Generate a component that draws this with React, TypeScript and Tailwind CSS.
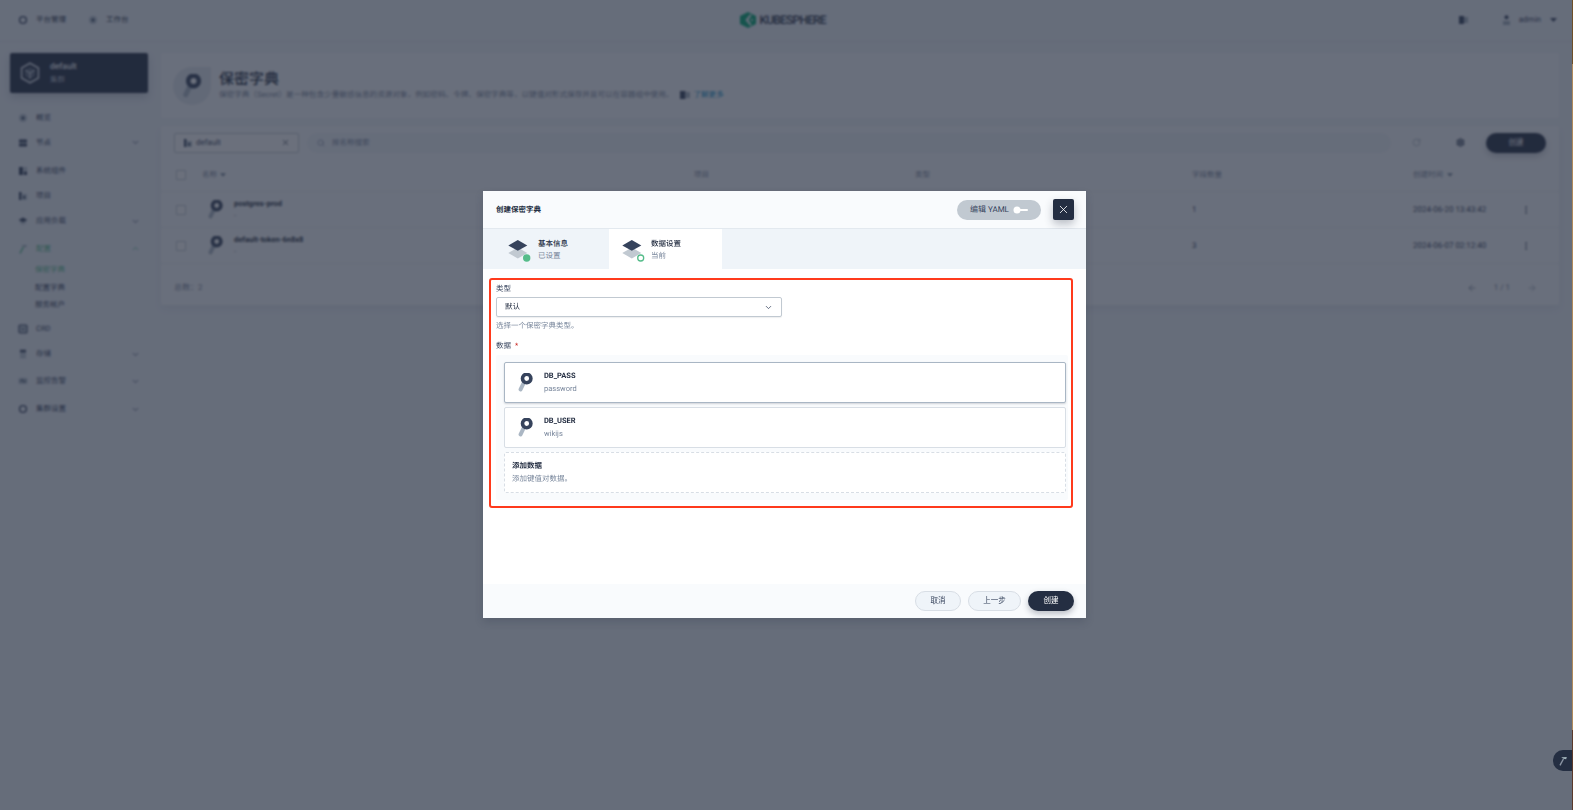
import React from "react";
import { ChevronDown, ChevronUp, X, Search, RotateCw, Settings, EllipsisVertical, ArrowLeft, ArrowRight } from "lucide-react";

const font = { fontFamily: '"Roboto","Noto Sans CJK SC",sans-serif' };

function KeyIcon({ size = 19, dark = "#36435c", light = "#abb7c4", hole = "#ffffff" }: { size?: number; dark?: string; light?: string; hole?: string }) {
  return (
    <svg width={size} height={size} viewBox="0 0 19 19" fill="none">
      <path d="M8.4 8.5 L4.6 16.4" stroke={light} strokeWidth="4" strokeLinecap="round" />
      <circle cx="10.7" cy="5.5" r="4.2" stroke={dark} strokeWidth="3.6" fill={hole} />
    </svg>
  );
}

function StackIcon({ done }: { done: boolean }) {
  return (
    <svg width="26" height="26" viewBox="0 0 26 26" fill="none">
      <path d="M12.8 11.5 L22.3 17 L12.8 22.5 L3.3 17 Z" fill="#c1c9d1" />
      <path d="M12.8 4 L22.3 9.4 L12.8 14.8 L3.3 9.4 Z" fill="#36435c" />
      {done ? <circle cx="21.7" cy="22" r="3.7" fill="#55bc8a" /> : <circle cx="21.7" cy="22" r="3" fill="#fff" stroke="#55bc8a" strokeWidth="1.3" />}
    </svg>
  );
}

function NavIcon({ kind, color = "#36435c" }: { kind: string; color?: string }) {
  return (
    <svg width="10" height="10" viewBox="0 0 10 10" fill="none">
      {kind === "ring" && <circle cx="5" cy="5" r="3.4" stroke={color} strokeWidth="1.4" />}
      {kind === "dot" && (<><circle cx="5" cy="5" r="3.9" fill="#b6c2cd" /><circle cx="5" cy="5" r="1.5" fill={color} /></>)}
      {kind === "node" && (<><rect x="1" y="1.6" width="8" height="3" rx=".5" fill={color} /><rect x="1" y="5.4" width="8" height="3" rx=".5" fill={color} /></>)}
      {kind === "grid" && (<><rect x="1" y="1" width="4" height="8" fill={color} /><rect x="5.8" y="1" width="3.2" height="3.6" fill="#b6c2cd" /><rect x="5.8" y="5.4" width="3.2" height="3.6" fill={color} /></>)}
      {kind === "proj" && (<><rect x="1" y="1" width="2.5" height="8" fill={color} /><rect x="3.5" y="3" width="5.5" height="6" fill="#b6c2cd" /><rect x="5.2" y="5" width="2" height="2.6" fill={color} /></>)}
      {kind === "load" && (<><path d="M5 1.5 L9.4 4 L5 6.5 L.6 4 Z" fill={color} /><path d="M1.8 5.8 L5 7.6 L8.2 5.8 L8.2 7 L5 8.8 L1.8 7 Z" fill="#b6c2cd" /></>)}
      {kind === "hammer" && (<><path d="M2 9.4 L5.4 3" stroke={color} strokeWidth="1.4" /><path d="M3.2 1.2 L8.8 1 L8.2 3.2 L5.4 2.8 Z" fill="#9fb0b8" /></>)}
      {kind === "crd" && (<><rect x="1" y="1" width="8" height="8" rx="1" stroke={color} strokeWidth="1.1" fill="#b6c2cd" /><path d="M3.5 4.4 L5 5.8 L6.5 4.4" stroke={color} /></>)}
      {kind === "store" && (<><rect x="2" y=".8" width="6" height="2.6" fill={color} /><rect x="2" y="3.8" width="6" height="2.4" fill="#b6c2cd" /><rect x="2" y="6.6" width="6" height="2.6" fill="#b6c2cd" /></>)}
      {kind === "mon" && (<><rect x=".8" y="2" width="8.4" height="6" rx=".5" fill="#b6c2cd" /><path d="M1.5 5 H3.5 L4.4 3.2 L5.6 6.4 L6.4 5 H8.5" stroke={color} strokeWidth=".8" /></>)}
    </svg>
  );
}

function SideItem({ icon, label, h, chevron, active }: { icon: string; label: string; h: string; chevron?: boolean; active?: boolean }) {
  return (
    <div className={`flex items-center pl-[18px] pr-[21px] ${h}`}>
      <span className="w-[18px] flex"><NavIcon kind={icon} color={active ? "#55bc8a" : "#36435c"} /></span>
      <span className={`flex-1 text-[7.5px] ${active ? "text-[#55bc8a]" : "text-[#36435c]"}`}>{label}</span>
      {chevron && (active ? <ChevronUp size={9} color="#55bc8a" strokeWidth={2} /> : <ChevronDown size={9} color="#36435c" strokeWidth={2} />)}
    </div>
  );
}

function Row({ name, count, time }: { name: string; count: string; time: string }) {
  return (
    <div className="flex items-center h-[36px] border-b border-[#e9eef4]">
      <span className="w-[10px] h-[10px] ml-[15px] border border-[#c1c9d1] rounded-[1px] bg-white" />
      <span className="ml-[20px] w-[19px] flex"><KeyIcon size={19} /></span>
      <div className="ml-[9px] w-[460px] flex flex-col gap-[2px]">
        <span className="text-[7.5px] leading-[10px] font-bold text-[#242e42]">{name}</span>
        <span className="text-[7.5px] leading-[10px] text-[#79879c]">-</span>
      </div>
      <span className="w-[221px] text-[8px] text-[#36435c]">-</span>
      <span className="w-[277px] text-[8px] text-[#36435c]">Opaque</span>
      <span className="w-[221px] text-[8px] text-[#36435c]">{count}</span>
      <span className="w-[108px] text-[8px] text-[#36435c]">{time}</span>
      <EllipsisVertical size={10} color="#36435c" />
    </div>
  );
}

function DataRow({ k, v, active }: { k: string; v: string; active?: boolean }) {
  return (
    <div className={`flex items-center h-[41px] bg-white rounded-[2px] pl-[11px] ${active ? "border border-[#a9b6c4] shadow-[0_1px_2px_rgba(35,45,65,0.2)]" : "border border-[#d8dee5]"}`}>
      <span className="w-[28px] flex"><KeyIcon size={19} /></span>
      <div className="flex flex-col gap-[3px]">
        <span className="text-[7.5px] leading-[10px] font-bold text-[#242e42]">{k}</span>
        <span className="text-[7.5px] leading-[10px] text-[#79879c]">{v}</span>
      </div>
    </div>
  );
}

export default function App() {
  return (
    <div className="relative w-[1573px] h-[810px] overflow-hidden bg-[#eff4f9] [text-rendering:geometricPrecision]" style={font}>
      {/* page beneath */}
      <div className="w-full h-full flex flex-col">
        <header className="h-[42px] shrink-0 flex items-center border-b border-[#e3e9ef] pl-[18px] pr-[16px] pb-[1px]">
          <NavIcon kind="ring" />
          <span className="ml-[8px] text-[7.5px] text-[#242e42]">平台管理</span>
          <span className="ml-[22px]"><NavIcon kind="dot" /></span>
          <span className="ml-[8px] text-[7.5px] text-[#242e42]">工作台</span>
          <div className="ml-[611px] flex items-center gap-[4px]">
            <svg width="16" height="16" viewBox="0 0 15 18" preserveAspectRatio="none">
              <path d="M7.5 0 L15 4.5 V13.5 L7.5 18 L0 13.5 V4.5 Z" fill="#00a971" />
              <path d="M9.5 2.5 L5 9 L9.5 15.5 L11 14.5 L8 9 L11 3.5 Z" fill="#eff4f9" />
              <path d="M12 7.5 L9.6 9 L12 10.5 Z" fill="#eff4f9" />
            </svg>
            <span className="text-[12px] font-medium text-[#242e42] tracking-[-0.8px]">KUBESPHERE</span>
          </div>
          <div className="flex-1" />
          <svg width="9" height="8" viewBox="0 0 9 8"><rect width="5" height="8" fill="#36435c" /><rect x="5" y="1" width="4" height="6" fill="#a4b0bd" /></svg>
          <svg className="ml-[34px]" width="9" height="10" viewBox="0 0 9 10"><circle cx="4.5" cy="2.2" r="2" fill="#36435c" /><path d="M1 6 H8 V10 H1 Z" fill="#a4b0bd" /></svg>
          <span className="ml-[8px] text-[8px] text-[#36435c]">admin</span>
          <svg className="ml-[9px]" width="7" height="4" viewBox="0 0 7 4"><path d="M0 0 H7 L3.5 4 Z" fill="#36435c" /></svg>
        </header>
        <div className="flex flex-1 pt-[11px]">
          <aside className="w-[161px] shrink-0">
            <div className="ml-[10px] w-[138px] h-[40px] flex items-center pl-[10px] gap-[10px] rounded-[2px] bg-[#242e42] shadow-[0_4px_8px_rgba(35,45,65,0.2)]">
              <svg width="20" height="22" viewBox="0 0 20 22" fill="none">
                <path d="M10 1.2 L18.4 6 V16 L10 20.8 L1.6 16 V6 Z" stroke="#d8dee5" strokeWidth="1.6" />
                <path d="M5 8 L10 5 L15 8 V14 L10 17 L5 14 Z" fill="#5a6578" />
                <path d="M5 8 L10 11 V17 M10 11 L15 8" stroke="#d8dee5" strokeWidth="1" />
              </svg>
              <div className="flex flex-col">
                <span className="text-[8.5px] leading-[13px] font-medium text-[#eff4f9]">default</span>
                <span className="text-[7.5px] leading-[12px] text-[#abb4be]">集群</span>
              </div>
            </div>
            <div className="mt-[12px] flex flex-col">
              <SideItem icon="dot" label="概览" h="h-[25px]" />
              <SideItem icon="node" label="节点" h="h-[25px]" chevron />
              <SideItem icon="grid" label="系统组件" h="h-[31px]" />
              <SideItem icon="proj" label="项目" h="h-[20px]" />
              <SideItem icon="load" label="应用负载" h="h-[30px]" chevron />
              <SideItem icon="hammer" label="配置" h="h-[25px]" chevron active />
              <div className="flex flex-col pl-[35px] text-[7.5px] text-[#36435c]">
                <span className="h-[17.5px] flex items-center text-[#55bc8a]">保密字典</span>
                <span className="h-[17.5px] flex items-center">配置字典</span>
                <span className="h-[17.5px] flex items-center">服务帐户</span>
              </div>
              <SideItem icon="crd" label="CRD" h="h-[31px]" />
              <SideItem icon="store" label="存储" h="h-[19px]" chevron />
              <SideItem icon="mon" label="监控告警" h="h-[35px]" chevron />
              <SideItem icon="ring" label="集群设置" h="h-[21px]" chevron />
            </div>
          </aside>
          <main className="w-[1398px] flex flex-col gap-[8px]">
            <section className="h-[65px] bg-[#f9fbfd] rounded-[2px] flex items-center pl-[12px]">
              <div className="w-[38px] h-[38px] rounded-full rounded-tr-none bg-[#e3e9ef] flex items-center justify-center">
                <KeyIcon size={24} />
              </div>
              <div className="ml-[8px] pb-[2px] flex flex-col">
                <span className="text-[15px] leading-[20px] font-medium text-[#242e42]">保密字典</span>
                <div className="flex items-center text-[7.6px] leading-[12px] text-[#79879c]">
                  <span>保密字典（Secret）是一种包含少量敏感信息的资源对象，例如密码、令牌、保密字典等，以键值对形式保存并且可以在容器组中使用。</span>
                  <svg className="ml-[7px]" width="10" height="8" viewBox="0 0 10 8"><rect width="5.5" height="8" fill="#36435c" /><rect x="5.5" y="1" width="4.5" height="6" fill="#a4b0bd" /></svg>
                  <span className="ml-[3px] font-medium text-[#329dce]">了解更多</span>
                </div>
              </div>
            </section>
            <section className="h-[179px] bg-[#f9fbfd] rounded-[2px] flex flex-col shadow-[0_4px_8px_rgba(35,45,65,0.06)]">
              <div className="h-[33px] shrink-0 flex items-center pl-[13px]">
                <div className="w-[125px] h-[20px] flex items-center px-[8px] bg-white border border-[#c1c9d1] rounded-[2px]">
                  <NavIcon kind="proj" />
                  <span className="ml-[3px] flex-1 text-[8px] text-[#36435c]">default</span>
                  <X size={9} color="#242e42" />
                </div>
                <div className="ml-[8px] w-[1084px] h-[20px] flex items-center pl-[10px] rounded-[10px] bg-[#eff4f9]">
                  <Search size={8} color="#79879c" />
                  <span className="ml-[7px] text-[7.5px] text-[#79879c]">按名称搜索</span>
                </div>
                <RotateCw className="ml-[21px]" size={9} color="#a4b0bd" />
                <Settings className="ml-[35px]" size={9} color="#36435c" strokeWidth={3} />
                <button className="ml-[21px] w-[60px] h-[20px] rounded-[10px] bg-[#242e42] text-[7.5px] text-white shadow-[0_3px_6px_rgba(35,45,65,0.25)]">创建</button>
              </div>
              <div className="h-[33px] shrink-0 flex items-center border-b border-[#e9eef4] text-[7.5px] text-[#79879c]">
                <span className="w-[10px] h-[10px] ml-[15px] border border-[#c1c9d1] rounded-[1px] bg-white" />
                <span className="ml-[16px] w-[492px] flex items-center gap-[3px]">名称<svg width="6" height="4" viewBox="0 0 7 4"><path d="M0 0 H7 L3.5 4 Z" fill="#79879c" /></svg></span>
                <span className="w-[221px]">项目</span>
                <span className="w-[277px]">类型</span>
                <span className="w-[221px]">字段数量</span>
                <span className="flex items-center gap-[4px]">创建时间<svg width="6" height="4" viewBox="0 0 7 4"><path d="M0 0 H7 L3.5 4 Z" fill="#79879c" /></svg></span>
              </div>
              <Row name="postgres-prod" count="1" time="2024-06-20 13:43:42" />
              <Row name="default-token-6n8x8" count="3" time="2024-06-07 02:12:40" />
              <div className="flex-1 flex items-center pl-[13px] pr-[22px] pt-[7px] text-[8px] text-[#79879c]">
                <span className="flex-1">总数：2</span>
                <ArrowLeft size={10} color="#79879c" />
                <span className="mx-[17px]">1 / 1</span>
                <ArrowRight size={10} color="#a4b0bd" />
              </div>
            </section>
          </main>
        </div>
      </div>

      {/* mask */}
      <div className="absolute inset-0 bg-[rgba(35,42,60,0.67)] backdrop-blur-[1px]" />
      <div className="absolute left-[1553px] top-[750px] w-[20px] h-[21px] rounded-l-[10px] bg-[#242e42] flex items-center justify-center">
        <NavIcon kind="hammer" color="#8a94a3" />
      </div>
      <div className="absolute right-0 top-0 w-[1px] h-full flex flex-col">
        <span className="h-[64px] bg-[#6f5028]" />
        <span className="flex-1 bg-[#b08a5c]" />
        <span className="h-[80px] bg-[#5c3a2a]" />
      </div>

      {/* modal */}
      <div className="absolute left-[483px] top-[191px] w-[603px] h-[427px] bg-white rounded-[2px] flex flex-col shadow-[0_4px_8px_rgba(35,45,65,0.2)]">
        <div className="h-[38px] shrink-0 flex items-center bg-[#f9fbfd] border-b border-[#e3e9ef] pl-[13px] pr-[12px]">
          <span className="flex-1 text-[7.5px] font-bold text-[#242e42]">创建保密字典</span>
          <div className="w-[84px] h-[20px] rounded-[10px] bg-[#c1c9d1] flex items-center pl-[13px] text-[8px] text-[#36435c]">
            <span>编辑 YAML</span>
            <svg className="ml-[4px]" width="15" height="8" viewBox="0 0 15 8"><rect x="3" y="3" width="12" height="2" rx="1" fill="#fff" /><circle cx="4" cy="4" r="3.5" fill="#fff" /></svg>
          </div>
          <button className="ml-[12px] w-[21px] h-[21px] rounded-[2px] bg-[#242e42] flex items-center justify-center shadow-[0_4px_8px_rgba(35,45,65,0.3)]">
            <X size={13} color="#ffffff" strokeWidth={1.5} />
          </button>
        </div>
        <div className="h-[40px] shrink-0 flex bg-[#eff4f9]">
          <div className="w-[126px] flex items-center pl-[22px] gap-[7px]">
            <StackIcon done />
            <div className="flex flex-col">
              <span className="text-[7.5px] leading-[13px] font-medium text-[#242e42]">基本信息</span>
              <span className="text-[7.5px] leading-[12px] text-[#79879c]">已设置</span>
            </div>
          </div>
          <div className="w-[113px] flex items-center pl-[10px] gap-[6px] bg-white">
            <StackIcon done={false} />
            <div className="flex flex-col">
              <span className="text-[7.5px] leading-[13px] font-medium text-[#242e42]">数据设置</span>
              <span className="text-[7.5px] leading-[12px] text-[#79879c]">当前</span>
            </div>
          </div>
        </div>
        <div className="flex-1 pl-[6px] pr-[13px] pt-[9px]">
          <div className="h-[230px] border-2 border-[#ff3a1c] rounded-[3px] pl-[5px] pr-[3px] pt-[3px] flex flex-col">
            <span className="text-[7.5px] leading-[12px] text-[#36435c]">类型</span>
            <div className="mt-[2px] w-[286px] h-[20px] flex items-center justify-between px-[8px] border border-[#c1c9d1] rounded-[2px] bg-white shadow-[0_1px_1px_rgba(35,45,65,0.08)]">
              <span className="text-[7.5px] text-[#242e42]">默认</span>
              <ChevronDown size={9} color="#36435c" strokeWidth={2} />
            </div>
            <span className="mt-[3px] text-[7.5px] leading-[12px] text-[#79879c]">选择一个保密字典类型。</span>
            <span className="mt-[8px] text-[7.5px] leading-[12px] text-[#36435c]">数据 <span className="ml-[2px] text-[#ca2621]">*</span></span>
            <div className="mt-[3px] h-[145px] bg-[#f9fbfd] rounded-[2px] pl-[8px] pr-[2px] pt-[7px] flex flex-col gap-[4px]">
              <DataRow k="DB_PASS" v="password" active />
              <DataRow k="DB_USER" v="wikijs" />
              <div className="h-[41px] border border-dashed border-[#d8dee5] rounded-[2px] bg-white pl-[7px] flex flex-col justify-center gap-[1px]">
                <span className="text-[7.5px] leading-[12px] font-bold text-[#242e42]">添加数据</span>
                <span className="text-[7.5px] leading-[12px] text-[#79879c]">添加键值对数据。</span>
              </div>
            </div>
          </div>
        </div>
        <div className="h-[34px] shrink-0 flex items-start justify-end gap-[7px] bg-[#f9fbfd] pr-[12px] pt-[7px] text-[7.5px]">
          <button className="w-[46px] h-[20px] rounded-[10px] border border-[#d8dee5] bg-[#eff4f9] text-[#36435c]">取消</button>
          <button className="w-[53px] h-[20px] rounded-[10px] border border-[#d8dee5] bg-[#eff4f9] text-[#36435c]">上一步</button>
          <button className="w-[46px] h-[20px] rounded-[10px] bg-[#242e42] text-white shadow-[0_3px_6px_rgba(35,45,65,0.3)]">创建</button>
        </div>
      </div>
    </div>
  );
}
